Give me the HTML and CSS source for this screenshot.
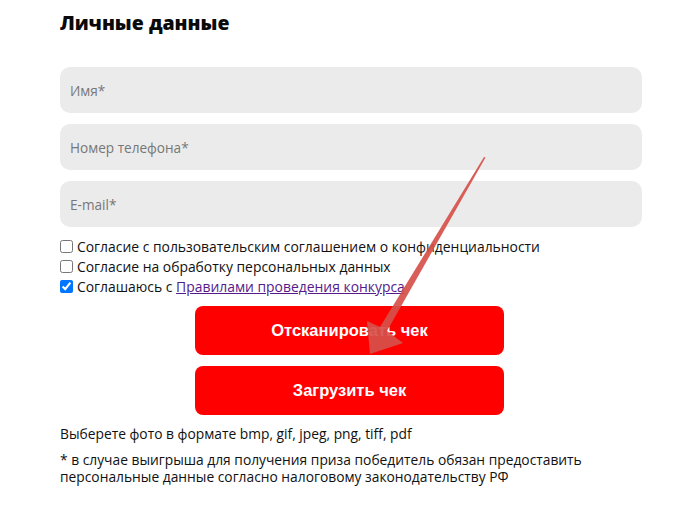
FILE: index.html
```html
<!DOCTYPE html>
<html>
	<head>
		<meta charset="utf-8" />
		<title>Личные данные</title>
		<link rel="stylesheet" href="styles.css">
	</head>
	<body>
		<div class="page">
			<h1 class="title">Личные данные</h1>
			<div class="fields">
				<input class="field" type="text" placeholder="Имя*">
				<input class="field" type="tel" placeholder="Номер телефона*">
				<input class="field" type="email" placeholder="E-mail*">
			</div>
			<div class="agree">
				<label class="agree-row"><input type="checkbox">Согласие с пользовательским соглашением о конфиденциальности</label>
				<label class="agree-row"><input type="checkbox">Согласие на обработку персональных данных</label>
				<label class="agree-row"><input type="checkbox" checked>Соглашаюсь с&nbsp;<a class="rules" href="#">Правилами проведения конкурса</a></label>
			</div>
			<div class="buttons">
				<button class="btn">Отсканировать чек</button>
				<button class="btn">Загрузить чек</button>
			</div>
			<p class="hint">Выберете фото в формате bmp, gif, jpeg, png, tiff, pdf</p>
			<p class="note">* в случае выигрыша для получения приза победитель обязан предоставить<br>персональные данные согласно налоговому законодательству РФ</p>
		</div>
		<svg class="arrow" width="700" height="512" viewBox="0 0 700 512">
			<polygon points="370,354 403,343 387,331 485.5,157.5 484,157 380,327 367,321" />
		</svg>
	</body>
</html>
```

FILE: styles.css
```css
html,body{
	margin: 0;
	padding: 0;
	background: #fff;
}
body{
	font-family: "Open Sans", "Noto Sans", sans-serif;
	color: #111;
	position: relative;
	width: 700px;
	height: 512px;
	overflow: hidden;
}
.page{
	width: 582px;
	padding: 8px 0 0 60px;
}
.title{
	margin: 0;
	font-size: 19.5px;
	line-height: 30px;
	font-weight: 800;
	color: #0a0a0a;
}
.fields{
	display: flex;
	flex-direction: column;
	gap: 11px;
	margin-top: 29px;
}
.field{
	box-sizing: border-box;
	width: 582px;
	height: 46px;
	border: none;
	outline: none;
	border-radius: 10px;
	background: #ebebeb;
	padding: 0 10px;
	font-family: "Open Sans", sans-serif;
	font-size: 13.6px;
	color: #333;
}
.field::placeholder{
	color: #777;
}
.agree{
	margin-top: 9px;
	display: flex;
	flex-direction: column;
}
.agree-row{
	display: flex;
	align-items: center;
	height: 20px;
	font-size: 13.9px;
	color: #111;
}
.agree-row input{
	width: 13px;
	height: 13px;
	margin: 0 4px 0 0;
}
.rules{
	color: #551a8b;
	text-decoration: underline;
}
.buttons{
	display: flex;
	flex-direction: column;
	align-items: flex-start;
	gap: 11px;
	margin-top: 10px;
	padding-left: 135px;
}
.btn{
	width: 309px;
	height: 49px;
	border: none;
	border-radius: 8px;
	background: #ff0000;
	color: #fff;
	font-family: "Liberation Sans", Arial, sans-serif;
	font-weight: bold;
	font-size: 16.5px;
}
.hint{
	margin: 10px 0 0;
	font-size: 13.8px;
	line-height: 17px;
}
.note{
	margin: 9px 0 0;
	font-size: 13.8px;
	line-height: 17px;
}
.arrow{
	position: absolute;
	left: 0;
	top: 0;
	pointer-events: none;
}
.arrow polygon{
	fill: #d6504a;
	opacity: 0.92;
}
```
